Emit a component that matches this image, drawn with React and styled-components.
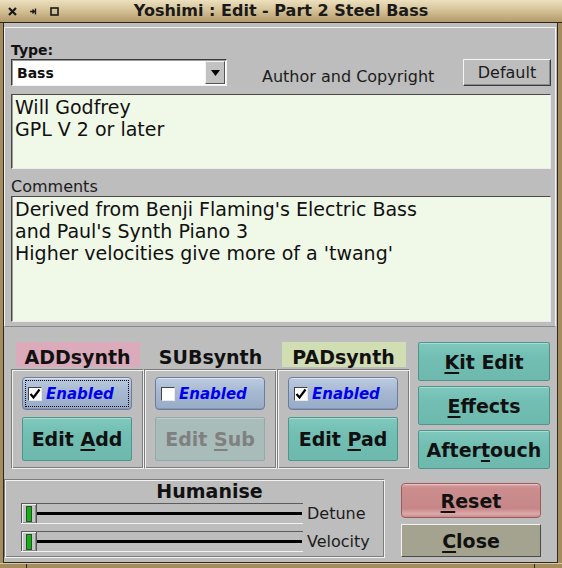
import React from "react";
import styled, { createGlobalStyle, css } from "styled-components";

const GlobalStyle = createGlobalStyle`
  html, body { margin: 0; padding: 0; background: #a48c5e; }
  body { font-family: "DejaVu Sans", "Liberation Sans", sans-serif; }
  * { box-sizing: border-box; }
`;

const FONT = `"DejaVu Sans", "Liberation Sans", sans-serif`;

const engraved = css`
  border: 1px solid;
  border-color: #7c7c7c #f2f2f2 #f2f2f2 #7c7c7c;
  box-shadow: inset 1px 1px 0 #f2f2f2, inset -1px -1px 0 #7c7c7c;
`;

const Window = styled.div`
  width: 562px;
  height: 568px;
  display: flex;
  flex-direction: column;
  background: #a48c5e;
  font-family: ${FONT};
  color: #111;
`;

const TitleBar = styled.div`
  height: 23px;
  flex: none;
  border-bottom: 1px solid #2e2616;
  background: linear-gradient(#ece0bf, #d6c398 45%, #b29a6a);
  display: grid;
  grid-template-columns: 1fr auto 1fr;
  align-items: center;
`;

const Controls = styled.div`
  display: flex;
  align-items: center;
  padding-left: 8px;
  gap: 13px;
`;

const Title = styled.div`
  font-weight: bold;
  font-size: 16px;
  line-height: 22px;
  color: #1a1a1a;
`;

const Frame = styled.div`
  flex: 1;
  display: flex;
  flex-direction: column;
  margin: 0 4px 0 3px;
  border: 1px solid #2e2a22;
  border-top: none;
  background: #bdbdbd;
`;

const BottomEdge = styled.div`
  height: 5px;
  flex: none;
  display: flex;
  justify-content: space-between;
  padding: 0 27px 0 26px;
  border-top: 1px solid #d8c8a0;
`;

const Tick = styled.span`
  width: 1px;
  height: 4px;
  background: #2e2616;
`;

const TopPanel = styled.div`
  margin: 4px 1px 0 0;
  border: 1px solid #f0f0f0;
  border-bottom-color: #8a8a8a;
  padding: 0 4px 4px 6px;
  display: flex;
  flex-direction: column;
`;

const BoldLabel = styled.div`
  margin-top: 14px;
  font-weight: bold;
  font-size: 14px;
  line-height: 17px;
`;

const TypeRow = styled.div`
  height: 27px;
  display: flex;
  align-items: flex-start;
`;

const Choice = styled.div`
  width: 216px;
  height: 27px;
  display: flex;
  background: #fff;
  border: 1px solid;
  border-color: #3c3c3c #f4f4f4 #f4f4f4 #3c3c3c;
  box-shadow: inset 1px 1px 0 #9a9a9a;
  padding: 1px 1px 1px 2px;
`;

const ChoiceText = styled.div`
  flex: 1;
  font-weight: bold;
  font-size: 14px;
  padding-left: 3px;
  display: flex;
  align-items: center;
`;

const ChoiceButton = styled.div`
  width: 20px;
  background: #c2c2c2;
  border: 1px solid;
  border-color: #f4f4f4 #555 #555 #f4f4f4;
  display: flex;
  align-items: center;
  justify-content: center;
`;

const PlainLabel = styled.div`
  font-size: 16px;
  line-height: 19px;
  color: #1c1c1c;
  padding-top: ${(p) => p.$top || 0}px;
  margin-left: ${(p) => p.$left || 0}px;
`;

const PlainButton = styled.button`
  margin-left: auto;
  width: 88px;
  height: 27px;
  padding: 0;
  font-family: ${FONT};
  font-size: 16px;
  color: #1c1c1c;
  background: #bdbdbd;
  border: 1px solid;
  border-color: #f4f4f4 #3c3c3c #3c3c3c #f4f4f4;
  box-shadow: inset -1px -1px 0 #8a8a8a;
`;

const TextBox = styled.div`
  margin-top: ${(p) => p.$top || 0}px;
  height: ${(p) => p.$h}px;
  background: #f0f8e8;
  border: 1px solid;
  border-color: #4a4a4a #ececec #ececec #4a4a4a;
  box-shadow: inset 1px 0 0 #9a9a9a;
  padding: 1px 3px;
  font-size: 19px;
  line-height: 22px;
  color: #111;
`;

const CommentsLabel = styled(PlainLabel)`
  margin-top: 8px;
`;

const Lower = styled.div`
  display: flex;
  flex-direction: column;
`;

const SynthRow = styled.div`
  margin-top: 15px;
  padding-left: 7px;
  display: flex;
  height: 127px;
`;

const SynthArea = styled.div`
  display: flex;
`;

const SynthCol = styled.div`
  width: 133px;
  display: flex;
  flex-direction: column;
  align-items: center;
`;

const SynthLabel = styled.div`
  width: 124px;
  height: 25px;
  padding-top: 4px;
  line-height: 22px;
  text-align: center;
  font-weight: bold;
  font-size: 19px;
  white-space: nowrap;
  background: ${(p) => p.$bg || "transparent"};
`;

const SynthFrame = styled.div`
  margin-top: 2px;
  align-self: stretch;
  height: 100px;
  ${engraved};
  padding: 7px 11px 0 10px;
  display: flex;
  flex-direction: column;
  gap: 7px;
`;

const Toggle = styled.div`
  height: 33px;
  border-radius: 4px;
  border: 1px solid #6b7d9e;
  background: linear-gradient(#bccbe0, #a6b8d1 45%, #98abc7);
  box-shadow: inset 0 1px 0 #dbe4f2, inset 0 -1px 0 #8597b6;
  display: flex;
  align-items: center;
  padding-left: 5px;
  gap: 4px;
  ${(p) =>
    p.$focused &&
    css`
      outline: 1px dotted #000;
      outline-offset: -4px;
    `}
`;

const CheckBox = styled.div`
  width: 14px;
  height: 14px;
  background: #fff;
  border: 1px solid;
  border-color: #444 #e8e8e8 #e8e8e8 #444;
  display: flex;
  align-items: center;
  justify-content: center;
`;

const ToggleText = styled.span`
  font-weight: bold;
  font-style: italic;
  font-size: 15px;
  color: #0000f0;
`;

const TealButton = styled.button`
  height: ${(p) => p.$h || 44}px;
  padding: 0;
  font-family: ${FONT};
  font-weight: bold;
  font-size: 19px;
  color: #111;
  background: linear-gradient(#7fc8be, #72beb3 40%, #6db9ae);
  border: 1px solid #4e958b;
  border-radius: 2px;
  box-shadow: inset 0 1px 0 #a9dcd4;
  display: flex;
  align-items: center;
  justify-content: center;
  ${(p) =>
    p.disabled &&
    css`
      color: #808080;
      background: #a8bdb9;
      border-color: #93aaa5;
      box-shadow: inset 0 1px 0 #bccdca;
    `}
`;

const U = styled.span`
  text-decoration: underline;
  text-decoration-thickness: 2px;
  text-underline-offset: 3px;
`;

const SideButtons = styled.div`
  margin-left: 8px;
  width: 132px;
  display: flex;
  flex-direction: column;
  gap: 5px;
`;

const BottomRow = styled.div`
  margin-top: 10px;
  display: flex;
  gap: 16px;
`;

const HumaniseFrame = styled.div`
  width: 381px;
  height: 79px;
  ${engraved};
  padding: 1px 0 0 16px;
  display: flex;
  flex-direction: column;
`;

const HumaniseTitle = styled.div`
  font-weight: bold;
  font-size: 19px;
  line-height: 20px;
  text-align: center;
  padding-left: 14px;
  margin-bottom: 2px;
`;

const SliderRow = styled.div`
  height: 21px;
  display: flex;
  align-items: center;
  gap: 4px;
  margin-bottom: 7px;
`;

const SliderBox = styled.div`
  width: 282px;
  height: 21px;
  display: flex;
  border-top: 1px solid #5c5c5c;
  border-bottom: 1px solid #f2f2f2;
`;

const Knob = styled.div`
  width: 16px;
  background: #c4c4c4;
  border-left: 1px solid #555;
  border-right: 1px solid #555;
  box-shadow: inset 1px 1px 0 #f0f0f0, inset -1px -1px 0 #8a8a8a;
  display: flex;
  align-items: center;
  justify-content: center;
`;

const Grip = styled.div`
  width: 6px;
  height: 16px;
  background: #10b410;
  border: 1px solid #2f4a2f;
`;

const Track = styled.div`
  flex: 1;
  display: flex;
  align-items: center;
  padding-right: 1px;
`;

const TrackLine = styled.div`
  flex: 1;
  height: 3px;
  background: #000;
`;

const ActionCol = styled.div`
  width: 140px;
  padding-top: 4px;
  display: flex;
  flex-direction: column;
  gap: 6px;
`;

const ResetButton = styled.button`
  height: 35px;
  padding: 0;
  font-family: ${FONT};
  font-weight: bold;
  font-size: 19px;
  color: #111;
  border-radius: 4px;
  border: 1px solid #9c5a5c;
  background: linear-gradient(#dba6a7 0%, #cb8d8e 12%, #c78788 75%, #dcaaaa 90%, #c88a8b 100%);
  box-shadow: inset 0 1px 0 #eec4c4;
`;

const CloseButton = styled.button`
  height: 33px;
  padding: 0;
  font-family: ${FONT};
  font-weight: bold;
  font-size: 19px;
  color: #111;
  background: #a3a38f;
  border: 1px solid;
  border-color: #f2f2f2 #4a4a4a #4a4a4a #f2f2f2;
`;

const Check = () => (
  <svg width="12" height="12" viewBox="0 0 12 12">
    <polyline points="1.5,6 4.5,9.5 10.5,1.5" fill="none" stroke="#000" strokeWidth="2.2" />
  </svg>
);

const SynthBlock = ({ name, bg, checked, focused, button, disabled }) => (
  <SynthCol>
    <SynthLabel $bg={bg}>{name}</SynthLabel>
    <SynthFrame>
      <Toggle $focused={focused}>
        <CheckBox>{checked && <Check />}</CheckBox>
        <ToggleText>Enabled</ToggleText>
      </Toggle>
      <TealButton disabled={disabled}>{button}</TealButton>
    </SynthFrame>
  </SynthCol>
);

const Slider = ({ label }) => (
  <SliderRow>
    <SliderBox>
      <Knob>
        <Grip />
      </Knob>
      <Track>
        <TrackLine />
      </Track>
    </SliderBox>
    <PlainLabel>{label}</PlainLabel>
  </SliderRow>
);

export default function App() {
  return (
    <Window>
      <GlobalStyle />
      <TitleBar>
        <Controls>
          <svg width="9" height="9" viewBox="0 0 9 9">
            <path d="M1 1L8 8M8 1L1 8" stroke="#1a1a1a" strokeWidth="2.2" />
          </svg>
          <svg width="7" height="7" viewBox="0 0 7 7">
            <path d="M0 3.5H4M2.5 1.5L4.5 3.5L2.5 5.5M5.5 0.5V6.5" stroke="#1a1a1a" strokeWidth="1.3" fill="none" />
          </svg>
          <svg width="9" height="9" viewBox="0 0 9 9">
            <rect x="1" y="1" width="7" height="7" fill="none" stroke="#1a1a1a" strokeWidth="1.6" />
          </svg>
        </Controls>
        <Title>Yoshimi : Edit - Part 2 Steel Bass</Title>
        <div />
      </TitleBar>
      <Frame>
        <TopPanel>
          <BoldLabel>Type:</BoldLabel>
          <TypeRow>
            <Choice>
              <ChoiceText>Bass</ChoiceText>
              <ChoiceButton>
                <svg width="9" height="6" viewBox="0 0 9 6">
                  <path d="M0 0H9L4.5 6Z" fill="#000" />
                </svg>
              </ChoiceButton>
            </Choice>
            <PlainLabel $top={8} $left={35}>
              Author and Copyright
            </PlainLabel>
            <PlainButton>Default</PlainButton>
          </TypeRow>
          <TextBox $top={8} $h={75}>
            Will Godfrey
            <br />
            GPL V 2 or later
          </TextBox>
          <CommentsLabel>Comments</CommentsLabel>
          <TextBox $h={126}>
            Derived from Benji Flaming's Electric Bass
            <br />
            and Paul's Synth Piano 3
            <br />
            Higher velocities give more of a 'twang'
          </TextBox>
        </TopPanel>
        <Lower>
          <SynthRow>
            <SynthArea>
              <SynthBlock
                name="ADDsynth"
                bg="#dcabbb"
                checked
                focused
                button={<span>Edit <U>A</U>dd</span>}
              />
              <SynthBlock
                name="SUBsynth"
                disabled
                button={<span>Edit <U>S</U>ub</span>}
              />
              <SynthBlock
                name="PADsynth"
                bg="#d1ddb3"
                checked
                button={<span>Edit <U>P</U>ad</span>}
              />
            </SynthArea>
            <SideButtons>
              <TealButton $h={39}><span><U>K</U>it Edit</span></TealButton>
              <TealButton $h={39}><span><U>E</U>ffects</span></TealButton>
              <TealButton $h={39}><span>After<U>t</U>ouch</span></TealButton>
            </SideButtons>
          </SynthRow>
          <BottomRow>
            <HumaniseFrame>
              <HumaniseTitle>Humanise</HumaniseTitle>
              <Slider label="Detune" />
              <Slider label="Velocity" />
            </HumaniseFrame>
            <ActionCol>
              <ResetButton><U>R</U>eset</ResetButton>
              <CloseButton><U>C</U>lose</CloseButton>
            </ActionCol>
          </BottomRow>
        </Lower>
      </Frame>
      <BottomEdge>
        <Tick />
        <Tick />
      </BottomEdge>
    </Window>
  );
}
